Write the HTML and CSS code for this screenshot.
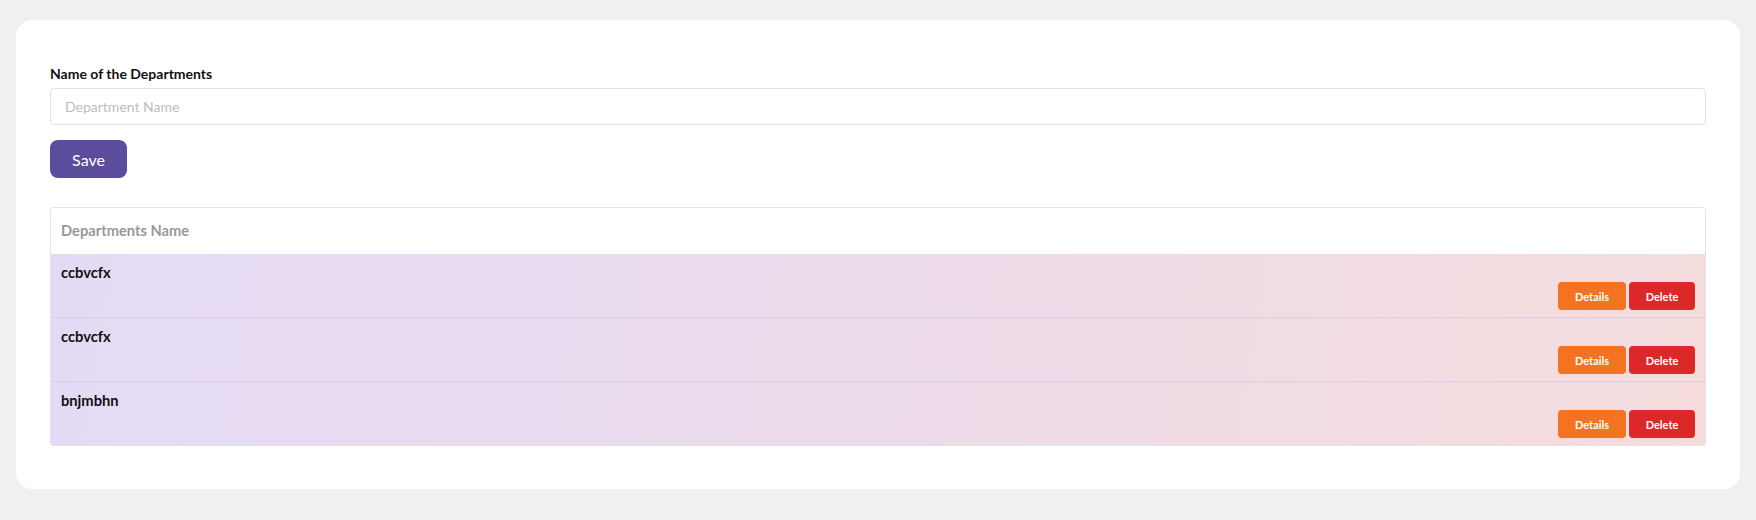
FILE: index.html
```html
<!DOCTYPE html>
<html lang="en">
<head>
	<meta charset="UTF-8">
	<title>Departments</title>
	<link rel="stylesheet" href="styles.css">
</head>
<body>
	<div class="card">
		<form class="dept-form" onsubmit="return false">
			<label class="field-label" for="deptName">Name of the Departments</label>
			<input id="deptName" class="field-input" type="text" placeholder="Department Name">
			<button class="btn-save" type="submit">Save</button>
		</form>

		<div class="dept-table">
			<div class="dept-head">Departments Name</div>
			<div class="dept-body">
				<div class="dept-row">
					<div class="dept-name">ccbvcfx</div>
					<div class="dept-actions">
						<button class="btn-small btn-details" type="button">Details</button>
						<button class="btn-small btn-delete" type="button">Delete</button>
					</div>
				</div>
				<div class="dept-row">
					<div class="dept-name">ccbvcfx</div>
					<div class="dept-actions">
						<button class="btn-small btn-details" type="button">Details</button>
						<button class="btn-small btn-delete" type="button">Delete</button>
					</div>
				</div>
				<div class="dept-row">
					<div class="dept-name">bnjmbhn</div>
					<div class="dept-actions">
						<button class="btn-small btn-details" type="button">Details</button>
						<button class="btn-small btn-delete" type="button">Delete</button>
					</div>
				</div>
			</div>
		</div>
	</div>
</body>
</html>
```

FILE: styles.css
```css
* {
	box-sizing: border-box;
}

body {
	margin: 0;
	padding: 20px 16px 31px;
	background-color: #f0f0f2;
	font-family: Lato, "Open Sans", sans-serif;
}

.card {
	background-color: #ffffff;
	border-radius: 16px;
	padding: 44px 34px 43px;
}

.dept-form {
	display: flex;
	flex-direction: column;
	align-items: flex-start;
}

.field-label {
	font-size: 14px;
	line-height: 20px;
	font-weight: 700;
	color: #111111;
	margin-bottom: 4px;
}

.field-input {
	width: 100%;
	height: 37px;
	border: 1px solid #e0e0e0;
	border-radius: 4px;
	padding: 0 14px;
	font-family: inherit;
	font-size: 14px;
	color: #333333;
	outline: none;
}

.field-input::placeholder {
	color: #bdbdbd;
}

.btn-save {
	margin-top: 15px;
	width: 77px;
	height: 38px;
	border: none;
	border-radius: 8px;
	background-color: #5b4d9c;
	color: #ffffff;
	font-family: inherit;
	font-size: 16px;
}

.dept-table {
	margin-top: 29px;
	border: 1px solid #e3e3e3;
	border-radius: 3px;
	overflow: hidden;
}

.dept-head {
	padding: 12px 10px 14px;
	font-size: 14.7px;
	line-height: 20px;
	font-weight: 700;
	color: #999999;
	background-color: #ffffff;
}

.dept-body {
	background: linear-gradient(100deg, #e3dbf6 0%, #ecdbea 50%, #f6dcdc 100%);
}

.dept-row {
	height: 64px;
	padding: 9px 10px 0;
	border-top: 1px solid #dacfe0;
}

.dept-row:first-child {
	height: 63px;
	border-top: none;
}

.dept-name {
	font-size: 14.7px;
	line-height: 19px;
	font-weight: 700;
	color: #111111;
}

.dept-actions {
	display: flex;
	justify-content: flex-end;
	gap: 3px;
}

.btn-small {
	height: 28px;
	border: none;
	border-radius: 4px;
	color: #ffffff;
	font-family: inherit;
	font-size: 11px;
	font-weight: 700;
}

.btn-details {
	width: 68px;
	background-color: #f47320;
}

.btn-delete {
	width: 66px;
	background-color: #dc2828;
}
```
